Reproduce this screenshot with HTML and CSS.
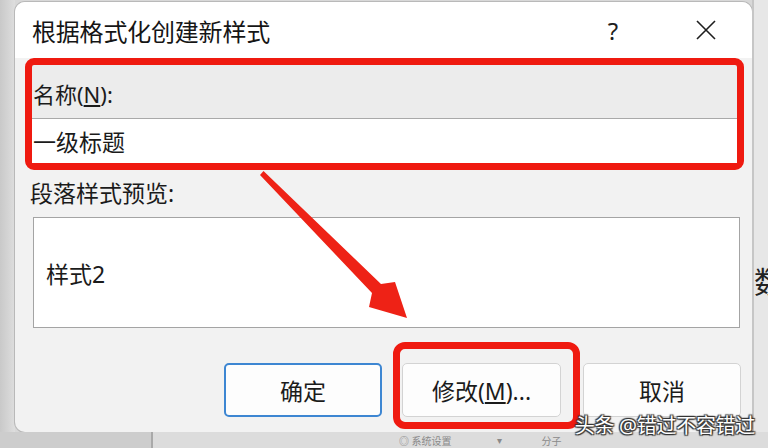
FILE: index.html
```html
<!DOCTYPE html>
<html>
<head>
    <title>根据格式化创建新样式</title>
    <link rel="stylesheet" href="styles.css">
</head>
<body>
    <div class="screen">
        <div class="main">
            <div class="gutter"></div>

            <div class="dialog">
                <div class="titlebar">
                    <span class="title">根据格式化创建新样式</span>
                    <span class="help">?</span>
                    <span class="close">
                        <svg width="20" height="20" viewBox="0 0 20 20">
                            <path d="M1 1 L19 19 M19 1 L1 19" stroke="#1e1e1e" stroke-width="1.6" fill="none"/>
                        </svg>
                    </span>
                </div>

                <div class="name-box">
                    <div class="name-label">名称(<u>N</u>):</div>
                    <div class="name-input">一级标题</div>
                </div>

                <div class="preview-label">段落样式预览:</div>
                <div class="preview">样式2</div>

                <div class="buttons">
                    <button class="btn btn-default">确定</button>
                    <button class="btn btn-marked">修改(<u>M</u>)...</button>
                    <button class="btn btn-cancel">取消</button>
                </div>
            </div>

            <div class="side">
                <span class="side-text">数</span>
            </div>
        </div>

        <div class="taskbar">
            <div class="taskbar-left"></div>
            <div class="taskbar-right">
                <span class="tb-item">◎ 系统设置</span>
                <span class="tb-item tb-caret">▾</span>
                <span class="tb-item">分子</span>
            </div>
        </div>

        <!-- annotation arrow over the dialog -->
        <svg class="arrow" width="768" height="448" viewBox="0 0 768 448">
            <polygon points="263.5,171 381,284 395,282 407,318 369,307 372,293 260,175" fill="#ee2216"/>
        </svg>

        <div class="watermark">头条 @错过不容错过</div>
    </div>
</body>
</html>
```

FILE: styles.css
```css
body {
    margin: 0;
    font-family: "Noto Sans", "Noto Sans CJK SC", sans-serif;
    color: #1b1b1b;
}
.screen {
    position: relative;
    width: 768px;
    height: 448px;
    overflow: hidden;
    display: flex;
    flex-direction: column;
    background: #d8d8d8;
}
.main {
    display: flex;
    height: 432px;
}
.gutter {
    width: 15px;
    background: linear-gradient(to right, #c9c9c9, #dedede);
}
.dialog {
    width: 737px;
    height: 430px;
    margin-top: 2px;
    background: #f2f2f2;
    border-radius: 10px;
    box-shadow: 0 0 0 1px #b9b9b9;
    overflow: hidden;
    display: flex;
    flex-direction: column;
}
.titlebar {
    height: 56px;
    flex-shrink: 0;
    display: flex;
    align-items: center;
    padding-left: 17px;
    padding-right: 23px;
    background: #ffffff;
}
.title {
    flex: 1;
    font-size: 24px;
    letter-spacing: -0.2px;
    color: #151515;
}
.help {
    width: 40px;
    text-align: center;
    font-size: 24px;
    color: #1e1e1e;
}
.close {
    width: 46px;
    margin-left: 50px;
    display: flex;
    justify-content: center;
}
.name-box {
    width: 705px;
    height: 98px;
    flex-shrink: 0;
    margin-left: 10px;
    border: 7px solid #ef1a10;
    border-radius: 9px;
    display: flex;
    flex-direction: column;
    background: #ececec;
}
.name-label {
    height: 53px;
    padding-left: 1px;
    font-size: 22px;
    line-height: 58px;
}
.name-input {
    flex: 1;
    padding-left: 1px;
    border-top: 1px solid #a9a9a9;
    background: #ffffff;
    font-size: 23px;
    display: flex;
    align-items: center;
}
.preview-label {
    height: 47px;
    flex-shrink: 0;
    margin-left: 15px;
    font-size: 23px;
    line-height: 46px;
}
.preview {
    width: 693px;
    height: 109px;
    flex-shrink: 0;
    margin-left: 18px;
    padding-left: 12px;
    border: 1px solid #a4a4a4;
    background: #ffffff;
    font-size: 23px;
    display: flex;
    align-items: center;
}
.buttons {
    display: flex;
    justify-content: flex-end;
    margin-top: 35px;
    padding-right: 11px;
}
.btn {
    width: 158px;
    height: 54px;
    font-family: inherit;
    font-size: 23px;
    color: #1b1b1b;
    background: #fdfdfd;
    border: 1px solid #d3d3d3;
    border-radius: 5px;
}
.btn-default {
    border: 2px solid #3d86d2;
}
.btn-marked {
    position: relative;
    width: 159px;
    margin-left: 20px;
}
.btn-marked::after {
    content: "";
    position: absolute;
    top: -22px;
    left: -10px;
    right: -20px;
    bottom: -13px;
    border: 7px solid #ef1a10;
    border-radius: 12px;
}
.btn-cancel {
    margin-left: 22px;
}
.side {
    flex: 1;
    background: #e7e7e7;
    border-left: 2px solid #c6c6c6;
    overflow: hidden;
    padding-top: 258px;
}
.side-text {
    font-size: 30px;
    color: #222222;
}
.taskbar {
    flex: 1;
    display: flex;
}
.taskbar-left {
    width: 151px;
    background: #cdcdcd;
    border-right: 2px solid #a9a9a9;
}
.taskbar-right {
    flex: 1;
    background: #dcdcdc;
    display: flex;
    align-items: center;
    padding-left: 246px;
}
.tb-item {
    font-size: 10px;
    color: #8a8a8a;
    margin-right: 45px;
}
.tb-caret {
    margin-right: 40px;
}
.arrow {
    position: absolute;
    left: 0;
    top: 0;
}
.watermark {
    position: absolute;
    right: 13px;
    bottom: 9px;
    font-size: 20px;
    letter-spacing: -0.3px;
    color: #ffffff;
    text-shadow: 0 0 2px #333, 1px 1px 1px #333, -1px -1px 1px #333, 1px -1px 1px #333, -1px 1px 1px #333;
}
```
